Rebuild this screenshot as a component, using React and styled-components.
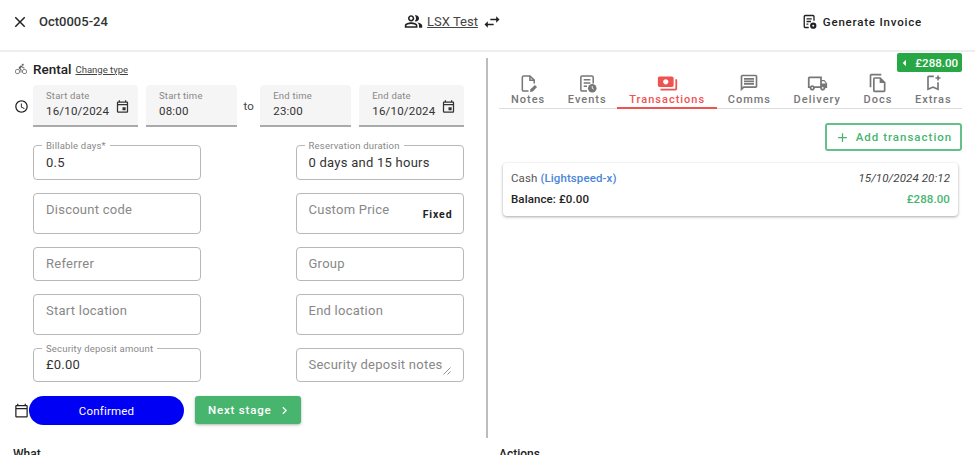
import React from 'react'
import styled, { createGlobalStyle } from 'styled-components'
import {
  MdClose,
  MdOutlinePeopleAlt,
  MdSwapHoriz,
  MdOutlineDirectionsBike,
  MdOutlineSchedule,
  MdOutlineEvent,
  MdOutlineCalendarToday,
  MdPayments,
  MdOutlineMessage,
  MdOutlineLocalShipping,
  MdOutlineFileCopy,
  MdOutlineBookmarkAdd,
  MdAdd,
  MdChevronRight,
  MdArrowLeft,
} from 'react-icons/md'

const GlobalStyle = createGlobalStyle`
  html, body {
    margin: 0;
    padding: 0;
    background: #fff;
    overflow: hidden;
  }
  body {
    font-family: Roboto, "Liberation Sans", sans-serif;
    color: #222;
  }
`

function NotesIcon() {
  return (
    <svg width="19" height="19" viewBox="0 0 20 20" fill="none" stroke="currentColor" strokeWidth="1.6">
      <path d="M10 18H5a1.5 1.5 0 0 1-1.5-1.5v-13A1.5 1.5 0 0 1 5 2h6.5l4.5 4.5V10" />
      <path d="M11.5 2v4.5H16" />
      <path d="M11.500 19l.7-3 4.500-4.500 2.300 2.300-4.500 4.500z" fill="currentColor" stroke="none" />
    </svg>
  )
}

function ListClockIcon({ size = 19 }) {
  return (
    <svg width={size} height={size} viewBox="0 0 20 20" fill="none" stroke="currentColor" strokeWidth="1.6">
      <path d="M9.5 18H4.5A1.5 1.5 0 0 1 3 16.500V3.500A1.500 1.500 0 0 1 4.500 2h10A1.500 1.500 0 0 1 16 3.500V10" />
      <path d="M6 6h7M6 9.500h7M6 13h3.500" />
      <circle cx="15" cy="15" r="4.500" fill="currentColor" stroke="none" />
      <path d="M15 12.800V15l1.500 1" stroke="#fff" strokeWidth="1" />
    </svg>
  )
}

function InvoiceIcon() {
  return (
    <svg width="15" height="15" viewBox="0 0 20 20" fill="none" stroke="currentColor" strokeWidth="1.8">
      <path d="M9 18H4.500A1.500 1.500 0 0 1 3 16.500V3.500A1.500 1.500 0 0 1 4.500 2h10A1.500 1.500 0 0 1 16 3.500V9" />
      <path d="M6 6.500h7M6 10h6M6 13.500h2.500" />
      <circle cx="15" cy="15.500" r="4.200" fill="currentColor" stroke="none" />
      <circle cx="15" cy="15.500" r="1.300" fill="#fff" stroke="none" />
    </svg>
  )
}

function ResizeGrip() {
  return (
    <svg width="8" height="8" viewBox="0 0 8 8" stroke="#888" strokeWidth="0.9">
      <path d="M0.500 7.500L7.500 0.500M4.500 7.500L7.500 4.500" />
    </svg>
  )
}

const tabs = [
  { label: 'Notes', icon: <NotesIcon /> },
  { label: 'Events', icon: <ListClockIcon /> },
  { label: 'Transactions', icon: <MdPayments size={21} />, active: true },
  { label: 'Comms', icon: <MdOutlineMessage size={20} /> },
  { label: 'Delivery', icon: <MdOutlineLocalShipping size={21} /> },
  { label: 'Docs', icon: <MdOutlineFileCopy size={20} /> },
  { label: 'Extras', icon: <MdOutlineBookmarkAdd size={20} /> },
]

const leftFields = [
  { label: 'Billable days*', value: '0.5', height: 35 },
  { placeholder: 'Discount code', height: 40.5 },
  { placeholder: 'Referrer', height: 34.5 },
  { placeholder: 'Start location', height: 40.5 },
  { label: 'Security deposit amount', value: '£0.00', height: 34.5 },
]

const rightFields = [
  { label: 'Reservation duration', value: '0 days and 15 hours', height: 35 },
  { placeholder: 'Custom Price', height: 40.5, adornment: 'Fixed' },
  { placeholder: 'Group', height: 34.5 },
  { placeholder: 'End location', height: 40.5 },
  { placeholder: 'Security deposit notes', height: 34.5, grip: true, centered: true },
]

function OutlinedField({ label, value, placeholder, height, adornment, grip, centered }) {
  return (
    <Field $height={height} $centered={centered || !!label}>
      {label && <FloatLabel>{label}</FloatLabel>}
      {value && <FieldValue>{value}</FieldValue>}
      {placeholder && <Placeholder>{placeholder}</Placeholder>}
      {adornment && <Adornment>{adornment}</Adornment>}
      {grip && <Grip><ResizeGrip /></Grip>}
    </Field>
  )
}

export default function App() {
  return (
    <Page>
      <GlobalStyle />
      <Header>
        <HeaderLeft>
          <MdClose size={18} />
          <BookingRef>Oct0005-24</BookingRef>
        </HeaderLeft>
        <HeaderCentre>
          <MdOutlinePeopleAlt size={19} />
          <CustomerName>LSX Test</CustomerName>
          <MdSwapHoriz size={20} />
        </HeaderCentre>
        <InvoiceButton>
          <InvoiceIcon />
          Generate Invoice
        </InvoiceButton>
      </Header>

      <Main>
        <LeftPanel>
          <TypeRow>
            <MdOutlineDirectionsBike size={12} color="#666" />
            <TypeName>Rental</TypeName>
            <ChangeType>Change type</ChangeType>
          </TypeRow>

          <DateRow>
            <MdOutlineSchedule size={15} />
            <DateFields>
              <DateField $width={105}>
                <DateLabel>Start date</DateLabel>
                <DateValue>16/10/2024</DateValue>
                <DateIcon><MdOutlineEvent size={15} /></DateIcon>
              </DateField>
              <DateField $width={91}>
                <DateLabel>Start time</DateLabel>
                <DateValue>08:00</DateValue>
              </DateField>
              <To>to</To>
              <DateField $width={91}>
                <DateLabel>End time</DateLabel>
                <DateValue>23:00</DateValue>
              </DateField>
              <DateField $width={105}>
                <DateLabel>End date</DateLabel>
                <DateValue>16/10/2024</DateValue>
                <DateIcon><MdOutlineEvent size={15} /></DateIcon>
              </DateField>
            </DateFields>
          </DateRow>

          <FieldGrid>
            {leftFields.map((f, i) => (
              <React.Fragment key={i}>
                <OutlinedField {...f} />
                <OutlinedField {...rightFields[i]} />
              </React.Fragment>
            ))}
          </FieldGrid>

          <StatusRow>
            <MdOutlineCalendarToday size={15} />
            <StatusPill>Confirmed</StatusPill>
            <NextButton>
              Next stage
              <MdChevronRight size={15} />
            </NextButton>
          </StatusRow>
        </LeftPanel>

        <Divider />

        <RightPanel>
          <BadgeRow>
            <Badge>
              <MdArrowLeft size={16} />
              £288.00
            </Badge>
          </BadgeRow>
          <TabBar>
            {tabs.map(t => (
              <Tab key={t.label} $active={t.active}>
                <TabIcon>{t.icon}</TabIcon>
                {t.label}
              </Tab>
            ))}
          </TabBar>
          <ActionRow>
            <AddButton>
              <MdAdd size={15} />
              Add transaction
            </AddButton>
          </ActionRow>
          <Card>
            <CardRow>
              <span>Cash <Provider>(Lightspeed-x)</Provider></span>
              <CardDate>15/10/2024 20:12</CardDate>
            </CardRow>
            <CardRow>
              <Balance>Balance: £0.00</Balance>
              <Amount>£288.00</Amount>
            </CardRow>
          </Card>
        </RightPanel>
      </Main>

      <Footer>
        <FooterTitle $width={486}>What</FooterTitle>
        <FooterTitle>Actions</FooterTitle>
      </Footer>
    </Page>
  )
}

const Page = styled.div`
  width: 975px;
  height: 455px;
  overflow: hidden;
`

const Header = styled.header`
  height: 52px;
  box-sizing: border-box;
  border-bottom: 2px solid #eee;
  display: grid;
  grid-template-columns: 1fr auto 1fr;
  align-items: center;
  padding: 0 53px 7px 11px;
`

const HeaderLeft = styled.div`
  display: flex;
  align-items: center;
  gap: 10px;
`

const BookingRef = styled.div`
  font-size: 13px;
  font-weight: 500;
  color: #333;
`

const HeaderCentre = styled.div`
  display: flex;
  align-items: center;
  gap: 4px;
  margin-left: -27px;
`

const CustomerName = styled.span`
  font-size: 13px;
  color: #444;
  text-decoration: underline;
`

const InvoiceButton = styled.div`
  justify-self: end;
  display: flex;
  align-items: center;
  gap: 6px;
  font-size: 11.5px;
  font-weight: 500;
  letter-spacing: 0.8px;
  color: #222;
`

const Main = styled.main`
  display: flex;
  height: 386px;
`

const LeftPanel = styled.section`
  width: 486px;
  flex: none;
  box-sizing: border-box;
  padding: 8px 22.5px 0 14px;
`

const TypeRow = styled.div`
  height: 18px;
  display: flex;
  align-items: center;
  margin-bottom: 7px;
  padding-left: 1px;
`

const TypeName = styled.span`
  font-size: 13.5px;
  font-weight: 500;
  margin-left: 6px;
`

const ChangeType = styled.span`
  font-size: 9.5px;
  color: #444;
  text-decoration: underline;
  margin-left: 4px;
`

const DateRow = styled.div`
  display: flex;
  align-items: center;
  margin-bottom: 18px;
  svg { flex: none; }
`

const DateFields = styled.div`
  display: flex;
  align-items: stretch;
  margin-left: 4px;
  gap: 8px;
`

const DateField = styled.div`
  position: relative;
  width: ${props => props.$width}px;
  height: 42px;
  box-sizing: border-box;
  background: #f5f5f5;
  border-bottom: 2px solid #aaa;
  border-radius: 4px 4px 0 0;
  padding: 5px 0 0 13px;
`

const DateLabel = styled.div`
  font-size: 9.5px;
  letter-spacing: 0.2px;
  color: #888;
  line-height: 12px;
`

const DateValue = styled.div`
  font-size: 11.5px;
  letter-spacing: 0.2px;
  color: #333;
  line-height: 14px;
  margin-top: 2px;
`

const DateIcon = styled.span`
  position: absolute;
  right: 8px;
  top: 14px;
  color: #333;
`

const To = styled.span`
  align-self: center;
  font-size: 11.5px;
  color: #444;
  margin: 0 -1.5px;
`

const FieldGrid = styled.div`
  display: grid;
  grid-template-columns: 168px 168px;
  justify-content: space-between;
  row-gap: 13px;
  margin-left: 19px;
`

const Field = styled.div`
  position: relative;
  height: ${props => props.$height}px;
  box-sizing: border-box;
  border: 1px solid #b8b8b8;
  border-radius: 4px;
  padding: ${props => (props.$centered ? '0' : '8px')} 12px 0;
  display: flex;
  align-items: ${props => (props.$centered ? 'center' : 'flex-start')};
  font-size: 13px;
  letter-spacing: 0.25px;
`

const FloatLabel = styled.span`
  position: absolute;
  top: -6px;
  left: 8px;
  padding: 0 4px;
  background: #fff;
  font-size: 9.5px;
  line-height: 11px;
  letter-spacing: 0.2px;
  color: #888;
`

const FieldValue = styled.span`
  color: #333;
  margin-top: -1px;
`

const Placeholder = styled.span`
  color: #888;
  white-space: nowrap;
`

const Adornment = styled.span`
  position: absolute;
  right: 10px;
  top: 14px;
  font-size: 10.5px;
  font-weight: 700;
  letter-spacing: 0.9px;
  color: #222;
`

const Grip = styled.span`
  position: absolute;
  right: 12px;
  bottom: 6px;
  line-height: 0;
`

const StatusRow = styled.div`
  display: flex;
  align-items: center;
  margin-top: 14px;
  height: 29px;
  svg { flex: none; }
`

const StatusPill = styled.div`
  width: 155px;
  height: 29px;
  border-radius: 15px;
  background: #0000f5;
  color: #fff;
  font-size: 11.5px;
  font-weight: 400;
  letter-spacing: 0.2px;
  display: flex;
  align-items: center;
  justify-content: center;
`

const NextButton = styled.div`
  height: 28px;
  width: 106px;
  box-sizing: border-box;
  padding-left: 13px;
  margin-left: 11px;
  align-self: flex-start;
  border-radius: 3px;
  background: #48b56f;
  color: #fff;
  font-size: 11.5px;
  font-weight: 500;
  letter-spacing: 0.8px;
  display: flex;
  align-items: center;
  gap: 6px;
  box-shadow: 0 1px 3px rgba(0, 0, 0, 0.3);
`

const Divider = styled.div`
  width: 2px;
  flex: none;
  margin-top: 6px;
  background: #bdbdbd;
`

const RightPanel = styled.section`
  flex: 1;
  min-width: 0;
  padding: 1px 13px 0 11px;
`

const BadgeRow = styled.div`
  display: flex;
  justify-content: flex-end;
`

const Badge = styled.div`
  width: 65px;
  height: 19px;
  box-sizing: border-box;
  border-radius: 2px;
  background: #28a745;
  color: #fff;
  font-size: 11.5px;
  font-weight: 500;
  display: flex;
  align-items: center;
  justify-content: flex-end;
  padding-right: 4px;
  gap: 3px;
`

const TabBar = styled.nav`
  display: flex;
  height: 37px;
  box-sizing: border-box;
  border-bottom: 1px solid #ddd;
  padding-left: 0.7px;
`

const Tab = styled.div`
  position: relative;
  height: 36px;
  box-sizing: border-box;
  padding: 0 11.3px 2px;
  display: flex;
  flex-direction: column;
  align-items: center;
  justify-content: flex-end;
  font-size: 11px;
  font-weight: 500;
  letter-spacing: 1px;
  line-height: 13px;
  color: ${props => (props.$active ? '#ef5350' : '#777')};
  &::after {
    content: '';
    display: ${props => (props.$active ? 'block' : 'none')};
    position: absolute;
    left: -1px;
    right: -1px;
    bottom: -1px;
    height: 2px;
    background: #ef5350;
  }
`

const TabIcon = styled.span`
  height: 20px;
  display: flex;
  align-items: center;
  justify-content: center;
  color: inherit;
`

const ActionRow = styled.div`
  display: flex;
  justify-content: flex-end;
  margin-top: 14px;
`

const AddButton = styled.div`
  width: 137px;
  height: 28px;
  box-sizing: border-box;
  border: 2px solid #62c088;
  border-radius: 3px;
  color: #48b56f;
  font-size: 11.5px;
  font-weight: 500;
  letter-spacing: 1px;
  display: flex;
  align-items: center;
  justify-content: center;
  gap: 6px;
`

const Card = styled.div`
  margin: 12px 4px 0;
  height: 53px;
  box-sizing: border-box;
  padding: 8px 8px 10px;
  border-radius: 4px;
  background: #fff;
  box-shadow: 0 1px 3px rgba(0, 0, 0, 0.35);
  display: flex;
  flex-direction: column;
  justify-content: space-between;
`

const CardRow = styled.div`
  display: flex;
  justify-content: space-between;
  align-items: center;
  font-size: 11.5px;
  color: #555;
  letter-spacing: 0.1px;
`

const Provider = styled.span`
  color: #4a86d8;
  font-weight: 500;
`

const CardDate = styled.span`
  font-style: italic;
  color: #444;
`

const Balance = styled.span`
  font-weight: 500;
  color: #222;
`

const Amount = styled.span`
  font-weight: 500;
  color: #48b56f;
`

const Footer = styled.div`
  display: flex;
  padding: 9px 0 0 13px;
`

const FooterTitle = styled.div`
  width: ${props => (props.$width ? `${props.$width}px` : 'auto')};
  font-size: 12px;
  font-weight: 500;
  color: #222;
`
